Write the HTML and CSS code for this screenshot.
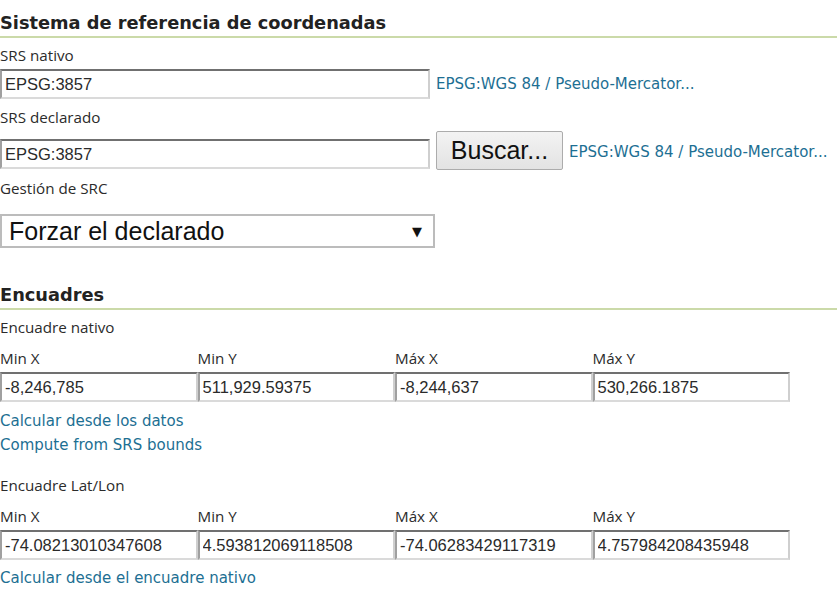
FILE: index.html
```html
<!DOCTYPE html>
<html lang="es">
<head>
<meta charset="utf-8">
<title>Sistema de referencia de coordenadas</title>
<link rel="stylesheet" href="styles.css">
</head>
<body>
<div class="page">
  <h2 class="section-title">Sistema de referencia de coordenadas</h2>

  <div class="label">SRS nativo</div>
  <div class="row">
    <input class="text-in wide" type="text" value="EPSG:3857">
    <a class="link inline-link" href="#">EPSG:WGS 84 / Pseudo-Mercator...</a>
  </div>

  <div class="label">SRS declarado</div>
  <div class="row row-declared">
    <input class="text-in wide declared" type="text" value="EPSG:3857">
    <button class="btn" type="button">Buscar...</button>
    <a class="link inline-link declared-link" href="#">EPSG:WGS 84 / Pseudo-Mercator...</a>
  </div>

  <div class="label">Gestión de SRC</div>
  <div class="select">
    <span>Forzar el declarado</span>
    <span class="arrow">▼</span>
  </div>

  <h2 class="section-title second">Encuadres</h2>

  <div class="label">Encuadre nativo</div>
  <div class="bbox">
    <div class="bbox-label">Min X</div>
    <div class="bbox-label">Min Y</div>
    <div class="bbox-label">Máx X</div>
    <div class="bbox-label">Máx Y</div>
    <input class="text-in cell" type="text" value="-8,246,785">
    <input class="text-in cell" type="text" value="511,929.59375">
    <input class="text-in cell" type="text" value="-8,244,637">
    <input class="text-in cell" type="text" value="530,266.1875">
  </div>
  <div class="links">
    <a class="link block-link" href="#">Calcular desde los datos</a>
    <a class="link block-link" href="#">Compute from SRS bounds</a>
  </div>

  <div class="label latlon">Encuadre Lat/Lon</div>
  <div class="bbox">
    <div class="bbox-label">Min X</div>
    <div class="bbox-label">Min Y</div>
    <div class="bbox-label">Máx X</div>
    <div class="bbox-label">Máx Y</div>
    <input class="text-in cell" type="text" value="-74.08213010347608">
    <input class="text-in cell" type="text" value="4.593812069118508">
    <input class="text-in cell" type="text" value="-74.06283429117319">
    <input class="text-in cell" type="text" value="4.757984208435948">
  </div>
  <div class="links last">
    <a class="link block-link" href="#">Calcular desde el encuadre nativo</a>
  </div>
</div>
</body>
</html>
```

FILE: styles.css
```css
html, body {
  margin: 0;
  padding: 0;
  background: #ffffff;
}

.page {
  padding-top: 12px;
  font-family: "Open Sans", "DejaVu Sans", sans-serif;
  color: #2b2b2b;
}

.section-title {
  margin: 0;
  font-family: "DejaVu Sans", sans-serif;
  font-weight: bold;
  font-size: 17.8px;
  line-height: 22px;
  color: #222222;
  padding-bottom: 2px;
  border-bottom: 2px solid #cbdaa9;
}

.section-title.second {
  margin-top: 36px;
}

.label {
  margin-top: 7px;
  font-size: 15.2px;
  line-height: 20px;
  color: #2b2b2b;
}

.row {
  display: flex;
  align-items: center;
  margin-top: 4px;
}

.text-in {
  box-sizing: border-box;
  height: 30px;
  margin: 0;
  padding: 0 0 0 3px;
  font-family: "Liberation Sans", Arial, sans-serif;
  font-size: 16.5px;
  color: #2a2a2a;
  background: #ffffff;
  border-style: solid;
  border-width: 2px;
  border-top-color: #707070;
  border-left-color: #a0a0a0;
  border-right-color: #cfcfcf;
  border-bottom-color: #dadada;
  outline: none;
}

.wide {
  width: 430px;
}

.link {
  font-family: "DejaVu Sans", sans-serif;
  font-size: 15px;
  color: #1d6f93;
  text-decoration: none;
}

.inline-link {
  margin-left: 6px;
}

.row + .label {
  margin-top: 8px;
}

.row-declared {
  align-items: flex-start;
}

.declared {
  margin-top: 8px;
}

.btn {
  box-sizing: border-box;
  margin-left: 6px;
  width: 127px;
  height: 39px;
  padding: 0;
  font-family: "Liberation Sans", Arial, sans-serif;
  font-size: 25px;
  color: #111111;
  background: linear-gradient(#f3f3f3, #e3e3e3);
  border: 1px solid #acacac;
  border-radius: 2px;
}

.declared-link {
  margin-top: 12px;
}

.select {
  box-sizing: border-box;
  margin-top: 16px;
  width: 435px;
  height: 34px;
  display: flex;
  align-items: center;
  justify-content: space-between;
  padding: 0 11px 0 7px;
  font-family: "Liberation Sans", Arial, sans-serif;
  font-size: 25px;
  color: #111111;
  border: 2px solid #bcbcbc;
}

.arrow {
  font-size: 13px;
  font-family: "DejaVu Sans", sans-serif;
}

.bbox {
  display: grid;
  grid-template-columns: repeat(4, 197.5px);
  margin-top: 11px;
}

.bbox-label {
  font-size: 15.2px;
  line-height: 20px;
  margin-bottom: 4px;
}

.cell {
  width: 100%;
}

.links {
  margin-top: 7px;
}

.block-link {
  display: block;
  line-height: 24px;
}

.label.latlon {
  margin-top: 18px;
}

.links.last {
  margin-top: 6px;
}
```
